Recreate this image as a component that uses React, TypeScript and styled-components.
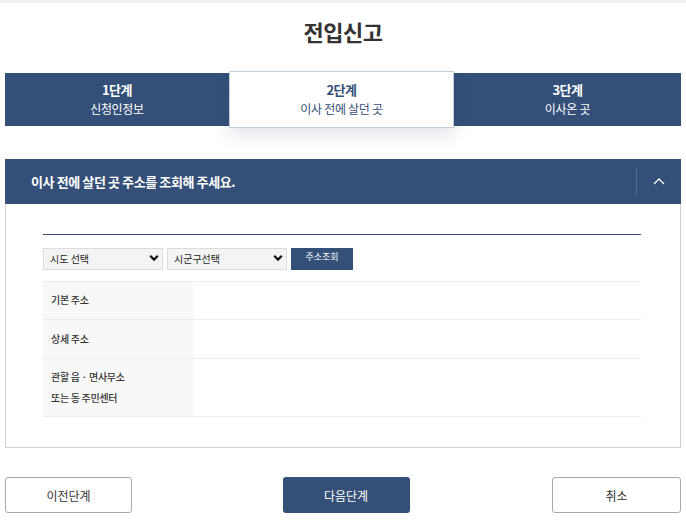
import styled, { createGlobalStyle } from "styled-components";

const NAVY = "#344f78";

const GlobalStyle = createGlobalStyle`
  body {
    margin: 0;
    background: #fff;
    font-family: "Noto Sans CJK KR", "Noto Sans", sans-serif;
    color: #333;
  }
`;

type Step = { no: string; label: string };

const STEPS: Array<Step> = [
  { no: "1단계", label: "신청인정보" },
  { no: "2단계", label: "이사 전에 살던 곳" },
  { no: "3단계", label: "이사온 곳" },
];

const ACTIVE_STEP = 1;

const ROWS = [
  { label: ["기본 주소"], height: 38 },
  { label: ["상세 주소"], height: 39 },
  { label: ["관할 읍 · 면사무소", "또는 동 주민센터"], height: 58 },
];

const ChevronDown = () => (
  <svg width="10" height="8" viewBox="0 0 10 8">
    <path d="M1.2 1.8 L5 5.6 L8.8 1.8" fill="none" stroke="#111" strokeWidth="2.2" />
  </svg>
);

const ChevronUp = () => (
  <svg width="12" height="8" viewBox="0 0 12 8">
    <path d="M1 7 L6 2 L11 7" fill="none" stroke="#fff" strokeWidth="1.3" />
  </svg>
);

const App = () => {
  return (
    <>
      <GlobalStyle />
      <Page>
        <Title>전입신고</Title>
        <Steps>
          {STEPS.map((step, index) => (
            <StepItem key={index} active={index === ACTIVE_STEP}>
              <StepNo>{step.no}</StepNo>
              <StepLabel>{step.label}</StepLabel>
            </StepItem>
          ))}
        </Steps>

        <Section>
          <SectionHeader>
            <SectionTitle>이사 전에 살던 곳 주소를 조회해 주세요.</SectionTitle>
            <Toggle>
              <ChevronUp />
            </Toggle>
          </SectionHeader>
          <SectionBody>
            <SearchRow>
              <Select>
                <span>시도 선택</span>
                <ChevronDown />
              </Select>
              <Select>
                <span>시군구선택</span>
                <ChevronDown />
              </Select>
              <SearchButton>주소조회</SearchButton>
            </SearchRow>
            <Table>
              {ROWS.map((row, index) => (
                <Row key={index} h={row.height}>
                  <Label>
                    {row.label.map((line, i) => (
                      <div key={i}>{line}</div>
                    ))}
                  </Label>
                  <Value />
                </Row>
              ))}
            </Table>
          </SectionBody>
        </Section>

        <Footer>
          <OutlineButton>이전단계</OutlineButton>
          <PrimaryButton>다음단계</PrimaryButton>
          <OutlineButton wide>취소</OutlineButton>
        </Footer>
      </Page>
    </>
  );
};

export default App;

const Page = styled.div`
  border-top: 3px solid #f1eff1;
  padding: 0 5px;
`;

const Title = styled.h1`
  margin: 0;
  height: 70px;
  display: flex;
  align-items: center;
  justify-content: center;
  padding-bottom: 14px;
  box-sizing: border-box;
  font-size: 22px;
  font-weight: 700;
  color: #333;
  letter-spacing: -0.5px;
`;

const Steps = styled.div`
  display: grid;
  grid-template-columns: 224px 225px 1fr;
  height: 53px;
  background: ${NAVY};
`;

const StepItem = styled.div<{ active: boolean }>`
  display: flex;
  flex-direction: column;
  align-items: center;
  justify-content: center;
  gap: 1px;
  color: ${({ active }) => (active ? NAVY : "#fff")};
  background: ${({ active }) => (active ? "#fff" : "transparent")};
  border: ${({ active }) => (active ? "1px solid #c6ccd8" : "none")};
  margin: ${({ active }) => (active ? "-2px 0" : "0")};
  box-shadow: ${({ active }) => (active ? "0 8px 16px rgba(40, 60, 100, 0.12)" : "none")};
  position: relative;
`;

const StepNo = styled.div`
  font-size: 13px;
  font-weight: 700;
  line-height: 18px;
  letter-spacing: -0.5px;
`;

const StepLabel = styled.div`
  font-size: 12px;
  line-height: 18px;
  letter-spacing: -0.3px;
`;

const Section = styled.div`
  margin-top: 33px;
`;

const SectionHeader = styled.div`
  height: 45px;
  background: ${NAVY};
  display: flex;
  align-items: center;
  justify-content: space-between;
`;

const SectionTitle = styled.div`
  padding-left: 26px;
  color: #fff;
  font-size: 13px;
  font-weight: 700;
  letter-spacing: -0.4px;
`;

const Toggle = styled.div`
  width: 45px;
  height: 29px;
  border-left: 1px solid #4f6890;
  display: flex;
  align-items: center;
  justify-content: center;
  padding-bottom: 2px;
  box-sizing: border-box;
`;

const SectionBody = styled.div`
  border: 1px solid #d2d2d2;
  border-top: none;
  padding: 30px 39px 30px 37px;
`;

const SearchRow = styled.div`
  border-top: 1px solid ${NAVY};
  padding-top: 13px;
  display: flex;
  gap: 4px;
`;

const Select = styled.div`
  width: 120px;
  height: 22px;
  box-sizing: border-box;
  background: #f4f4f4;
  border: 1px solid #dcdcdc;
  display: flex;
  align-items: center;
  justify-content: space-between;
  padding: 0 3px 2px 6px;
  font-size: 10px;
  color: #222;
`;

const SearchButton = styled.div`
  width: 62px;
  height: 22px;
  background: ${NAVY};
  color: #fff;
  font-size: 9px;
  display: flex;
  justify-content: center;
  padding-top: 2px;
  box-sizing: border-box;
`;

const Table = styled.div`
  margin-top: 11px;
  border-top: 1px solid #ececec;
`;

const Row = styled.div<{ h: number }>`
  display: grid;
  grid-template-columns: 150px 1fr;
  height: ${({ h }) => h}px;
  box-sizing: border-box;
  border-bottom: 1px solid #ececec;
`;

const Label = styled.div`
  background: #f8f8f8;
  padding: 0 0 2px 8px;
  display: flex;
  flex-direction: column;
  justify-content: center;
  font-size: 10px;
  font-weight: 500;
  color: #333;
  line-height: 21px;
  letter-spacing: -0.3px;
`;

const Value = styled.div`
  background: #fff;
`;

const Footer = styled.div`
  margin-top: 29px;
  display: flex;
  justify-content: space-between;
  align-items: center;
`;

const OutlineButton = styled.div<{ wide?: boolean }>`
  width: ${({ wide }) => (wide ? "129px" : "127px")};
  height: 36px;
  box-sizing: border-box;
  border: 1px solid #a9a9a9;
  border-radius: 3px;
  background: #fff;
  display: flex;
  align-items: center;
  justify-content: center;
  font-size: 12px;
  color: #333;
`;

const PrimaryButton = styled.div`
  width: 127px;
  height: 36px;
  margin-left: 8px;
  border-radius: 3px;
  background: ${NAVY};
  color: #fff;
  display: flex;
  align-items: center;
  justify-content: center;
  font-size: 12px;
`;
